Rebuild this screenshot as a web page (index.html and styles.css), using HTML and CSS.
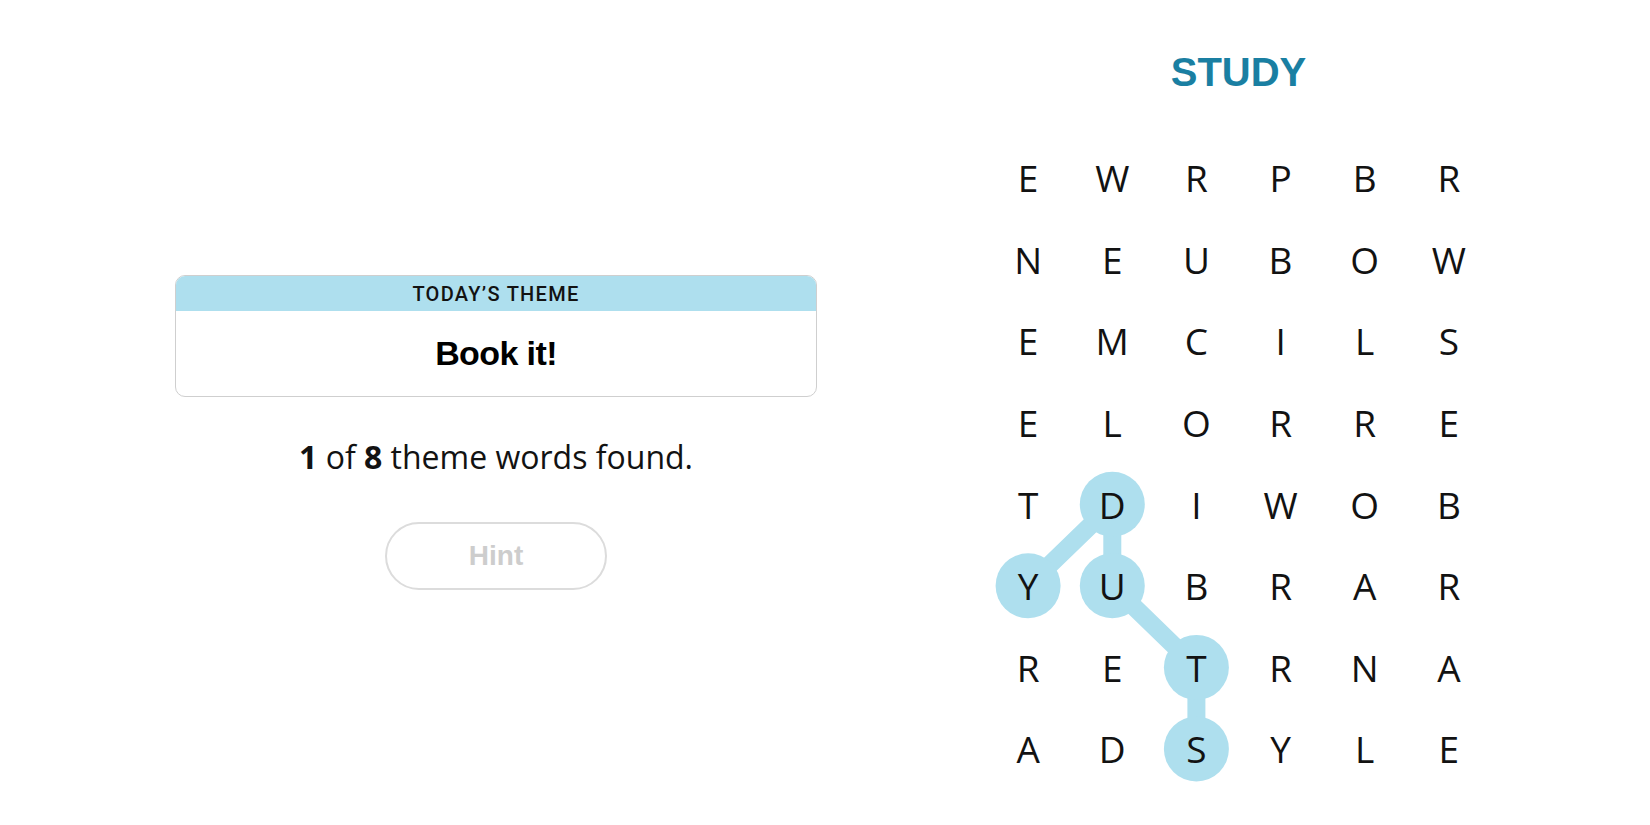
FILE: index.html
```html
<!DOCTYPE html>
<html lang="en">
<head>
<meta charset="utf-8">
<title>Strands</title>
<link rel="stylesheet" href="styles.css">
</head>
<body>
<main class="page">
  <section class="left">
    <div class="theme-card">
      <div class="theme-head">TODAY’S THEME</div>
      <div class="theme-body">Book it!</div>
    </div>
    <p class="progress"><b>1</b> of <b>8</b> theme words found.</p>
    <button class="hint">Hint</button>
  </section>
  <section class="right">
    <h1 class="word">STUDY</h1>
    <div class="board">
      <svg class="links" viewBox="0 0 505 653" width="505" height="653" aria-hidden="true">
        <g stroke="#aedfee" stroke-width="18" stroke-linecap="round">
          <line x1="126.3" y1="367.2" x2="42.1" y2="448.8"/>
          <line x1="126.3" y1="367.2" x2="126.3" y2="448.8"/>
          <line x1="126.3" y1="448.8" x2="210.4" y2="530.4"/>
          <line x1="210.4" y1="530.4" x2="210.4" y2="612"/>
        </g>
        <g fill="#aedfee">
          <circle cx="126.3" cy="367.2" r="32.5"/>
          <circle cx="42.1" cy="448.8" r="32.5"/>
          <circle cx="126.3" cy="448.8" r="32.5"/>
          <circle cx="210.4" cy="530.4" r="32.5"/>
          <circle cx="210.4" cy="612" r="32.5"/>
        </g>
      </svg>
      <span class="cell">E</span><span class="cell">W</span><span class="cell">R</span><span class="cell">P</span><span class="cell">B</span><span class="cell">R</span>
      <span class="cell">N</span><span class="cell">E</span><span class="cell">U</span><span class="cell">B</span><span class="cell">O</span><span class="cell">W</span>
      <span class="cell">E</span><span class="cell">M</span><span class="cell">C</span><span class="cell">I</span><span class="cell">L</span><span class="cell">S</span>
      <span class="cell">E</span><span class="cell">L</span><span class="cell">O</span><span class="cell">R</span><span class="cell">R</span><span class="cell">E</span>
      <span class="cell">T</span><span class="cell">D</span><span class="cell">I</span><span class="cell">W</span><span class="cell">O</span><span class="cell">B</span>
      <span class="cell">Y</span><span class="cell">U</span><span class="cell">B</span><span class="cell">R</span><span class="cell">A</span><span class="cell">R</span>
      <span class="cell">R</span><span class="cell">E</span><span class="cell">T</span><span class="cell">R</span><span class="cell">N</span><span class="cell">A</span>
      <span class="cell">A</span><span class="cell">D</span><span class="cell">S</span><span class="cell">Y</span><span class="cell">L</span><span class="cell">E</span>
    </div>
  </section>
</main>
</body>
</html>
```
FILE: styles.css
```css
* { box-sizing: border-box; }
html, body { margin: 0; padding: 0; background: #fff; }
body {
  font-family: "Open Sans", "Liberation Sans", Arial, sans-serif;
  color: #121212;
}
.page {
  display: flex;
  align-items: flex-start;
  gap: 169px;
  padding-left: 175px;
  height: 825px;
  overflow: hidden;
}
.left {
  width: 642px;
  display: flex;
  flex-direction: column;
  align-items: center;
  padding-top: 275px;
}
.theme-card {
  width: 642px;
  border: 1px solid #cfcfcf;
  border-radius: 10px;
  overflow: hidden;
}
.theme-head {
  height: 35px;
  background: #aedfee;
  display: flex;
  align-items: center;
  justify-content: center;
  font-family: Roboto, "Liberation Sans", sans-serif;
  font-weight: 500;
  font-size: 20px;
  letter-spacing: 1.3px;
  color: #121212;
}
.theme-body {
  height: 85px;
  display: flex;
  align-items: center;
  justify-content: center;
  font-family: "Liberation Sans", Arial, sans-serif;
  font-weight: 700;
  font-size: 34px;
  letter-spacing: -0.6px;
  color: #000;
}
.progress {
  margin: 41px 0 0;
  font-size: 32px;
  line-height: 37px;
  color: #121212;
}
.progress b { font-weight: 700; }
.hint {
  margin-top: 47px;
  width: 222px;
  height: 68px;
  border: 2px solid #dcdcdc;
  border-radius: 34px;
  background: #fff;
  font-family: "Liberation Sans", Arial, sans-serif;
  font-weight: 700;
  font-size: 28px;
  color: #cdcdcd;
  padding: 0;
}
.right {
  width: 505px;
  display: flex;
  flex-direction: column;
  align-items: center;
}
.word {
  margin: 50px 0 0;
  height: 44px;
  line-height: 44px;
  font-family: "Liberation Sans", Arial, sans-serif;
  font-weight: 700;
  font-size: 40px;
  letter-spacing: 0;
  color: #1a7fa2;
}
.board {
  position: relative;
  margin-top: 43px;
  width: 505px;
  display: grid;
  grid-template-columns: repeat(6, 84.17px);
  grid-template-rows: repeat(8, 81.6px);
}
.links {
  position: absolute;
  left: 0;
  top: 0;
}
.cell {
  position: relative;
  display: flex;
  align-items: center;
  justify-content: center;
  font-size: 37px;
  font-weight: 400;
  color: #121212;
}
```
